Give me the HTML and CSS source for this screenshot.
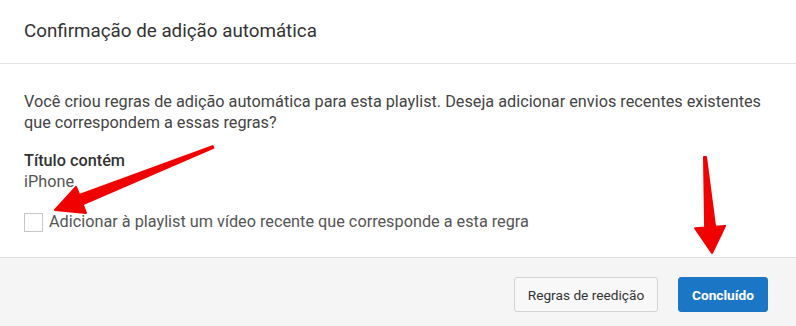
FILE: index.html
```html
<!DOCTYPE html>
<html lang="pt">
<head>
<meta charset="utf-8">
<link rel="stylesheet" href="styles.css">
</head>
<body>
<div class="dialog">
  <div class="header">Confirmação de adição automática</div>
  <div class="content">
    <p class="intro">Você criou regras de adição automática para esta playlist. Deseja adicionar envios recentes existentes que correspondem a essas regras?</p>
    <div class="rule">
      <div class="rule-title">Título contém</div>
      <div class="rule-value">iPhone</div>
    </div>
    <label class="check-row">
      <span class="checkbox"></span>
      <span class="check-label">Adicionar à playlist um vídeo recente que corresponde a esta regra</span>
    </label>
  </div>
  <div class="footer">
    <button class="btn btn-secondary">Regras de reedição</button>
    <button class="btn btn-primary">Concluído</button>
  </div>
  <svg class="arrows" width="796" height="326" viewBox="0 0 796 326">
    <polygon class="arrow" points="212.6,146.1 79.3,194.9 76,187 55,210 86,213 82.7,204.3 213.4,147.9"/>
    <polygon class="arrow" points="704,157 705.1,227.5 695.1,228.2 712,253 725,226 715.1,226.7 706,157"/>
  </svg>
</div>
</body>
</html>
```
FILE: styles.css
```css
* { box-sizing: border-box; }
html, body { margin: 0; padding: 0; background: #fff; }
body { font-family: Roboto, "Noto Sans", Arial, sans-serif; color: #333; }

.dialog {
  position: relative;
  width: 796px;
  height: 326px;
  display: flex;
  flex-direction: column;
  background: #fff;
  overflow: hidden;
}

.header {
  height: 64px;
  flex: none;
  display: flex;
  align-items: center;
  padding: 0 24px 1px;
  font-size: 18.8px;
  color: #333;
  border-bottom: 1px solid #e2e2e2;
}

.content {
  flex: 1;
  padding: 27px 24px 0;
  color: #444;
  font-size: 16.25px;
}

.intro {
  margin: 0;
  line-height: 21px;
}

.rule {
  margin-top: 17px;
  line-height: 21px;
}

.rule-title { font-weight: 500; color: #333; }
.rule-value { color: #555; }

.check-row {
  display: flex;
  align-items: center;
  gap: 6px;
  margin-top: 20px;
  line-height: 20px;
}

.checkbox {
  width: 19px;
  height: 19px;
  border: 1px solid #c6c6c6;
  background: #fff;
  flex: none;
}

.check-label { color: #555; }

.footer {
  height: 69px;
  flex: none;
  background: #f5f5f5;
  border-top: 1px solid #dedede;
  display: flex;
  justify-content: flex-end;
  align-items: flex-start;
  gap: 20px;
  padding: 19px 28px 0 0;
}

.btn {
  height: 35px;
  font-family: Roboto, "Noto Sans", Arial, sans-serif;
  font-size: 13.7px;
  border-radius: 3px;
  padding: 0;
  white-space: nowrap;
  text-align: center;
  cursor: pointer;
}

.btn-secondary {
  width: 144px;
  background: #f8f8f8;
  border: 1px solid #d3d3d3;
  color: #333;
}

.btn-primary {
  width: 90px;
  background: #1b77c5;
  border: 1px solid #1b77c5;
  color: #fff;
  font-weight: 700;
}

.arrows {
  position: absolute;
  left: 0;
  top: 0;
  pointer-events: none;
}

.arrow {
  fill: #f00000;
  stroke: #f00000;
  stroke-width: 2;
  stroke-linejoin: round;
}
```
